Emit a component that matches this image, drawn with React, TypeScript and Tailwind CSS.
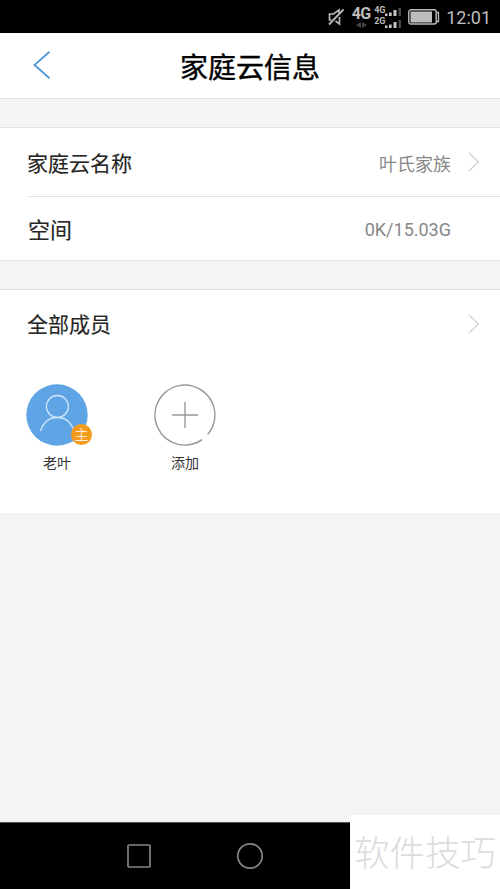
import React from 'react';

const cjk = "font-['Noto_Sans_CJK_SC',sans-serif]";

function SignalBars() {
  return (
    <svg width="17" height="8" viewBox="0 0 17 8" className="shrink-0">
      <rect x="0" y="5.5" width="2.5" height="2.5" fill="#c4c4c4" />
      <rect x="4" y="4.5" width="2.7" height="3.5" fill="#c4c4c4" />
      <rect x="8.5" y="2" width="3" height="6" fill="#c4c4c4" />
      <rect x="13.5" y="0" width="2.5" height="8" fill="#484848" />
    </svg>
  );
}

function StatusBar() {
  return (
    <div className="flex h-[33px] items-center justify-end bg-black pr-[9px] text-[#bdbdbd]">
      {/* muted speaker */}
      <svg width="18" height="18" viewBox="0 0 18 18" fill="none" stroke="#b5b5b5" strokeWidth="1.7" className="mr-[7px]">
        <path d="M4.5 12H2.5V6H6.5L12 2V5.5M12.5 9V16L8.5 13" />
        <path d="M16.5 1.5L2 16.5" strokeWidth="1.9" />
      </svg>
      <div className="mr-1 flex w-[18px] flex-col items-center">
        <span className="font-['Roboto',sans-serif] text-[16px] leading-[15px] font-bold tracking-[-0.5px]">4G</span>
        <svg width="11" height="6" viewBox="0 0 11 6" className="mt-px" fill="#444">
          <path d="M5 0V6L0 3ZM6 0V6L11 3Z" />
        </svg>
      </div>
      <div className="mr-1.5 -mt-px flex flex-col font-['Roboto',sans-serif] text-[9px] leading-[11px] font-bold">
        <div className="flex h-[11px] items-center">
          <span className="w-[11px]">4G</span>
          <div className="pt-1"><SignalBars /></div>
        </div>
        <div className="flex h-[12px] items-center">
          <span className="w-[11px]">2G</span>
          <div className="pt-1"><SignalBars /></div>
        </div>
      </div>
      <svg width="32" height="16" viewBox="0 0 32 16" className="mr-1.5 mt-px">
        <rect x="0.8" y="0.8" width="27.4" height="14.2" rx="2" fill="none" stroke="#bdbdbd" strokeWidth="1.4" />
        <rect x="2.5" y="2.5" width="21.5" height="11" fill="#bdbdbd" />
        <path d="M28.5 3.5H30.5V12.5H28.5" fill="none" stroke="#bdbdbd" strokeWidth="1.3" />
      </svg>
      <span className="mt-0.5 font-['Roboto',sans-serif] text-[18px] leading-5">12:01</span>
    </div>
  );
}

function Chevron() {
  return (
    <svg width="12" height="20" viewBox="0 0 12 20" fill="none" stroke="#cfcfcf" strokeWidth="1.2">
      <path d="M1 1L10.5 10L1 19" />
    </svg>
  );
}

function OwnerAvatar() {
  return (
    <div className="relative h-[62px] w-[62px]">
      <svg width="62" height="62" viewBox="0 0 62 62" fill="none" stroke="#cfe5fa" strokeWidth="1.3">
        <circle cx="31" cy="31" r="30.7" fill="#5fa5e6" stroke="none" />
        <circle cx="31.4" cy="22.5" r="11" />
        <path d="M14.5 47C17.5 38 24 33.5 31.4 33.5C38.5 33.5 45 38 48 47" />
      </svg>
      <span className="absolute top-[40px] left-[45px] flex h-[21px] w-[21px] items-center justify-center rounded-full bg-[#f39c1c] pb-px text-[14px] leading-none font-light text-white">
        主
      </span>
    </div>
  );
}

function AddButton() {
  return (
    <svg width="62" height="62" viewBox="0 0 62 62" fill="none" stroke="#999" strokeWidth="1.4">
      {/* ring is left open at the lower right */}
      <path d="M53.7 50.6A30 30 0 1 0 48.2 55.6" />
      <path d="M31 18V44M18 31H44" />
    </svg>
  );
}

export default function App() {
  return (
    <div className={`relative flex h-[889px] w-[500px] flex-col overflow-hidden bg-[#f4f4f4] text-[#262626] ${cjk}`}>
      <StatusBar />

      {/* Header */}
      <div className="grid h-[66px] grid-cols-[180px_140px_180px] items-center border-b border-[#dfe2e2] bg-white">
        <svg width="18" height="28" viewBox="0 0 18 28" fill="none" stroke="#4f97d8" strokeWidth="1.8" className="-mt-px ml-[33px]">
          <path d="M16.5 0.8L1.5 14L16.5 27.2" />
        </svg>
        <h1 className="text-[28px] leading-9 whitespace-nowrap text-black [-webkit-text-stroke:0.4px]">家庭云信息</h1>
      </div>

      {/* Cloud info */}
      <div className="mt-7 border-y border-[#e2e2e2] bg-white">
        <div className="flex h-[68px] items-center pr-5 pl-[27px]">
          <span className="text-[21px] leading-7 [-webkit-text-stroke:0.15px]">家庭云名称</span>
          <span className="mt-0.5 mr-[17px] ml-auto text-[18px] leading-6 text-[#888]">叶氏家族</span>
          <Chevron />
        </div>
        <div className="ml-[27px] h-px bg-[#e2e2e2]" />
        <div className="flex h-[63px] items-center justify-between pr-[49px] pl-7">
          <span className="-mt-0.5 text-[22px] leading-7 [-webkit-text-stroke:0.15px]">空间</span>
          <span className="mt-0.5 font-['Roboto',sans-serif] text-[18px] leading-6 text-[#888]">0K/15.03G</span>
        </div>
      </div>

      {/* Members */}
      <div className="mt-7 h-[224px] border-t border-[#e2e2e2] bg-white">
        <div className="flex h-[68px] items-center justify-between pr-5 pl-[27px]">
          <span className="-mt-0.5 text-[21px] leading-7 [-webkit-text-stroke:0.15px]">全部成员</span>
          <Chevron />
        </div>
        <div className="mt-[26px] ml-[26px] flex gap-[66px] text-[14px] leading-5 text-[#333]">
          <div className="flex w-[62px] flex-col items-center gap-1.5">
            <OwnerAvatar />
            <span>老叶</span>
          </div>
          <div className="flex w-[62px] flex-col items-center gap-1.5">
            <AddButton />
            <span>添加</span>
          </div>
        </div>
      </div>

      {/* Navigation bar */}
      <div className="mt-auto flex h-[67px] items-center border-t border-[#555] bg-black">
        <svg width="24" height="24" viewBox="0 0 24 24" className="ml-[127px]" fill="none" stroke="#858585" strokeWidth="1.7">
          <rect x="1" y="1" width="22" height="22" rx="1" />
        </svg>
        <svg width="28" height="28" viewBox="0 0 28 28" className="ml-[85px]" fill="none" stroke="#858585" strokeWidth="1.7">
          <circle cx="14" cy="14" r="12.2" />
        </svg>
      </div>

      <div className="absolute right-0 bottom-0 flex h-[74px] w-[150px] items-center justify-center bg-white pb-0.5 text-[35.5px] font-light whitespace-nowrap text-[#dcdcdc]">
        软件技巧
      </div>
    </div>
  );
}
